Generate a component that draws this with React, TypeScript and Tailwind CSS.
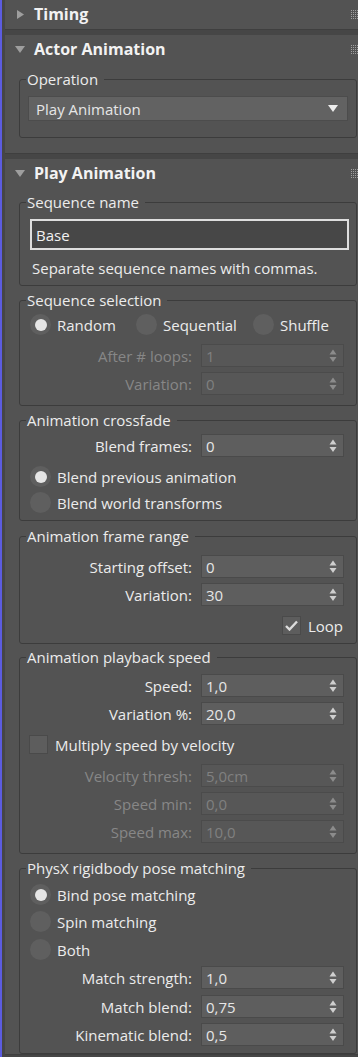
import React from 'react';

const Caret = ({ open }: { open: boolean }) => (
  <div className="w-[10px] h-[10px] flex items-center justify-center shrink-0">
    {open ? (
      <svg width="10" height="7" viewBox="0 0 10 7">
        <path d="M0 0 L10 0 L5 7 Z" fill="#9e9e9e" />
      </svg>
    ) : (
      <svg width="7" height="9" viewBox="0 0 7 9">
        <path d="M0 0 L7 4.5 L0 9 Z" fill="#9e9e9e" />
      </svg>
    )}
  </div>
);

const Grip = () => (
  <svg width="8" height="10" viewBox="0 0 8 10" className="ml-auto shrink-0">
    {[0, 1, 2, 3, 4].map((r) =>
      [0, 1, 2, 3].map((c) => (
        <rect key={`${r}-${c}`} x={c * 2} y={r * 2} width="1" height="1" fill="#a0a0a0" />
      ))
    )}
  </svg>
);

function Rollout({
  title,
  open,
  className = '',
  children,
}: {
  title: string;
  open: boolean;
  className?: string;
  children?: React.ReactNode;
}) {
  return (
    <div className={`w-[358px] shrink-0 bg-[#535353] border-b border-[#3f3f3f] ${className}`}>
      <div className="h-[29px] flex items-center pl-[10px] pr-[4px]">
        <Caret open={open} />
        <span className="ml-[9px] text-[16px] leading-[19px] font-bold text-[#f2f2f2]">{title}</span>
        <Grip />
      </div>
      {open && <div className="pl-[14px] pr-[6px]">{children}</div>}
    </div>
  );
}

function Group({ label, className = '', children }: { label: string; className?: string; children: React.ReactNode }) {
  return (
    <fieldset className={`border border-[#3c3c3c] rounded-[3px] ${className}`}>
      <legend className="ml-[6px] pl-[1px] pr-[6px] text-[15px] leading-[18px] text-[#ececec]">{label}</legend>
      {children}
    </fieldset>
  );
}

function Spinner({
  label,
  value,
  disabled = false,
  className = '',
}: {
  label: string;
  value: string;
  disabled?: boolean;
  className?: string;
}) {
  const arrow = disabled ? '#8c8c8c' : '#cfcfcf';
  return (
    <div className={`flex items-center ${className}`}>
      <div className={`w-[172px] text-right text-[15px] leading-[18px] ${disabled ? 'text-[#878787]' : 'text-[#ececec]'}`}>
        {label}
      </div>
      <div
        className={`ml-[9px] w-[143px] h-[23px] flex items-center pl-[4px] pr-[6px] border ${
          disabled ? 'bg-[#575757] border-[#4b4b4b] text-[#808080]' : 'bg-[#5e5e5e] border-[#4a4a4a] text-[#e6e6e6]'
        } text-[15px] leading-[18px]`}
      >
        <span>{value}</span>
        <svg width="8" height="14" viewBox="0 0 8 14" className="ml-auto">
          <path d="M4 0.5 L7.5 5.5 L0.5 5.5 Z" fill={arrow} />
          <path d="M0.5 8 L7.5 8 L4 13 Z" fill={arrow} />
        </svg>
      </div>
    </div>
  );
}

const Radio = ({ label, checked = false, className = '' }: { label: string; checked?: boolean; className?: string }) => (
  <div className={`flex items-center h-[21px] ${className}`}>
    <div className="w-[21px] h-[21px] rounded-full bg-[#5f5f5f] flex items-center justify-center shrink-0">
      {checked && <div className="w-[12px] h-[12px] rounded-full bg-[#e6e6e6]" />}
    </div>
    <span className="ml-[6px] text-[15px] leading-[18px] text-[#ececec] whitespace-nowrap">{label}</span>
  </div>
);

const Checkbox = ({ label, checked = false, className = '' }: { label: string; checked?: boolean; className?: string }) => (
  <div className={`flex items-center h-[19px] ${className}`}>
    <div className="w-[19px] h-[19px] bg-[#5d5d5d] border border-[#4a4a4a] flex items-center justify-center shrink-0">
      {checked && (
        <svg width="13" height="11" viewBox="0 0 13 11">
          <path d="M1 6 L4.5 9.5 L12 1.5" stroke="#dcdcdc" strokeWidth="2.4" fill="none" />
        </svg>
      )}
    </div>
    <span className="ml-[7px] text-[15px] leading-[18px] text-[#ececec] whitespace-nowrap">{label}</span>
  </div>
);

export default function App() {
  return (
    <div className="w-[358px] h-[1057px] overflow-hidden bg-[#464646] flex font-['Open_Sans',sans-serif]">
      <div className="w-[2px] shrink-0 bg-[#5c5ce0]" />
      <div className="w-[3px] shrink-0" />
      <div className="flex flex-col w-[358px] shrink-0">
        <Rollout title="Timing" open={false} />

        <Rollout title="Actor Animation" open className="mt-[5px]">
          <div className="pt-[6px] pb-[15px]">
            <Group label="Operation">
              <div className="mt-[8px] mb-[16px] ml-[8px] w-[320px] h-[25px] bg-[#626262] border border-[#4c4c4c] flex items-center pl-[7px] pr-[9px]">
                <span className="text-[15px] leading-[18px] text-[#e6e6e6]">Play Animation</span>
                <svg width="10" height="7" viewBox="0 0 10 7" className="ml-auto">
                  <path d="M0 0 L10 0 L5 7 Z" fill="#ededed" />
                </svg>
              </div>
            </Group>
          </div>
        </Rollout>

        <Rollout title="Play Animation" open className="mt-[5px]">
          <div className="pt-[5px]">
            <Group label="Sequence name">
              <div className="mt-[8px] ml-[10px] w-[319px] h-[31px] bg-[#474747] border-2 border-[#dedede] flex items-center pl-[4px]">
                <span className="text-[15px] leading-[18px] text-[#f2f2f2]">Base</span>
              </div>
              <div className="mt-[9px] mb-[8px] pl-[12px] text-[15px] leading-[18px] text-[#ececec]">
                Separate sequence names with commas.
              </div>
            </Group>

            <Group label="Sequence selection" className="mt-[5px]">
              <div className="mt-[5px] pl-[10px] flex">
                <Radio label="Random" checked className="w-[106px]" />
                <Radio label="Sequential" className="w-[117px]" />
                <Radio label="Shuffle" />
              </div>
              <Spinner label="After # loops:" value="1" disabled className="mt-[9px]" />
              <Spinner label="Variation:" value="0" disabled className="mt-[5px] mb-[10px]" />
            </Group>

            <Group label="Animation crossfade" className="mt-[5px]">
              <Spinner label="Blend frames:" value="0" className="mt-[5px]" />
              <div className="pl-[10px]">
                <Radio label="Blend previous animation" checked className="mt-[9px]" />
                <Radio label="Blend world transforms" className="mt-[5px] mb-[7px]" />
              </div>
            </Group>

            <Group label="Animation frame range" className="mt-[6px]">
              <Spinner label="Starting offset:" value="0" className="mt-[10px]" />
              <Spinner label="Variation:" value="30" className="mt-[5px]" />
              <div className="mt-[10px] mb-[8px] flex justify-end pr-[13px]">
                <Checkbox label="Loop" checked />
              </div>
            </Group>

            <Group label="Animation playback speed" className="mt-[4px]">
              <Spinner label="Speed:" value="1,0" className="mt-[8px]" />
              <Spinner label="Variation %:" value="20,0" className="mt-[5px]" />
              <div className="pl-[9px] mt-[10px]">
                <Checkbox label="Multiply speed by velocity" />
              </div>
              <Spinner label="Velocity thresh:" value="5,0cm" disabled className="mt-[10px]" />
              <Spinner label="Speed min:" value="0,0" disabled className="mt-[5px]" />
              <Spinner label="Speed max:" value="10,0" disabled className="mt-[5px] mb-[10px]" />
            </Group>

            <Group label="PhysX rigidbody pose matching" className="mt-[5px]">
              <div className="pl-[10px]">
                <Radio label="Bind pose matching" checked className="mt-[7px]" />
                <Radio label="Spin matching" className="mt-[6px]" />
                <Radio label="Both" className="mt-[7px]" />
              </div>
              <Spinner label="Match strength:" value="1,0" className="mt-[6px]" />
              <Spinner label="Match blend:" value="0,75" className="mt-[6px]" />
              <Spinner label="Kinematic blend:" value="0,5" className="mt-[5px] mb-[7px]" />
            </Group>
          </div>
        </Rollout>
      </div>
    </div>
  );
}
